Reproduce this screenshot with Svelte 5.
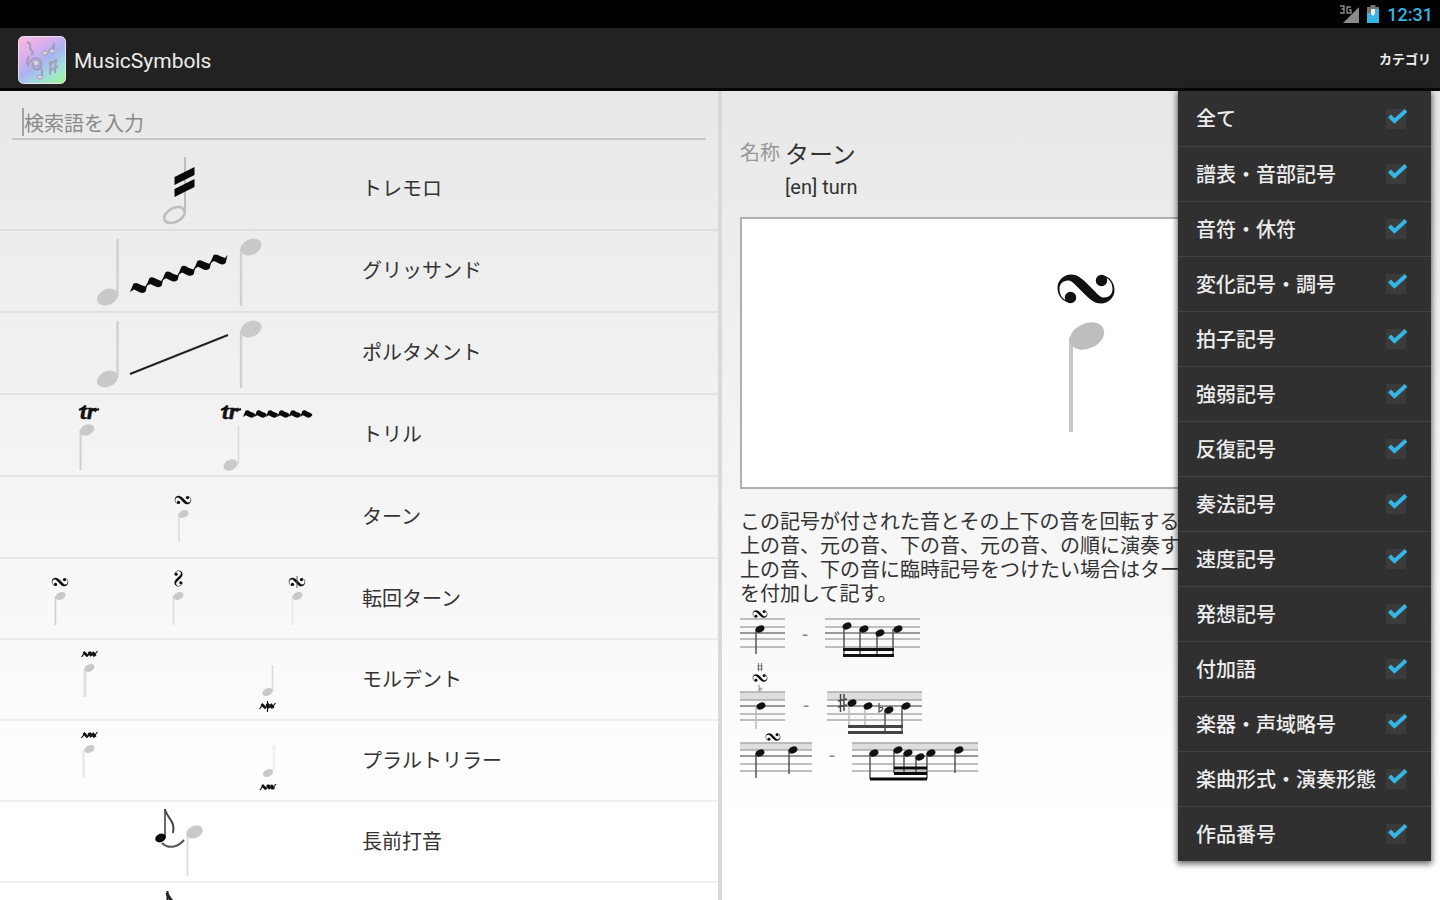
<script>
  const symbols = [
    { id: 'tremolo', name: 'トレモロ' },
    { id: 'glissando', name: 'グリッサンド' },
    { id: 'portamento', name: 'ポルタメント' },
    { id: 'trill', name: 'トリル' },
    { id: 'turn', name: 'ターン' },
    { id: 'inverted', name: '転回ターン', short: true },
    { id: 'mordent', name: 'モルデント', short: true },
    { id: 'pralltriller', name: 'プラルトリラー', short: true },
    { id: 'appoggiatura', name: '長前打音', short: true },
    { id: 'next', name: '', short: true }
  ];

  let categories = $state(
    [
      '全て', '譜表・音部記号', '音符・休符', '変化記号・調号', '拍子記号',
      '強弱記号', '反復記号', '奏法記号', '速度記号', '発想記号',
      '付加語', '楽器・声域略号', '楽曲形式・演奏形態', '作品番号'
    ].map((name) => ({ name, on: true }))
  );

  let query = $state('');

  const steps = (n) => Array.from({ length: n }, (_, i) => i);
</script>

{#snippet turn(x, y, s, r = 0)}
  <g transform="translate({x} {y}) rotate({r}) scale({s})" fill="#111">
    <path d="M-15 14C-24 13-28.500 6-28.500-1C-28.500-9-22-14.500-15-14.500C-9-14.500-5-11 0-6.500L9 2.500C13 6.500 15 8.500 18 8.500C23 8.500 26.500 5 26.500 0C26.500-6 23-11 18-12L15-14C24-13 28.500-6 28.500 1C28.500 9 22 14.500 15 14.500C9 14.500 5 11 0 6.500L-9-2.500C-13-6.500-15-8.500-18-8.500C-23-8.500-26.500-5-26.500 0C-26.500 6-23 11-18 12Z" />
    <circle cx="-15.500" cy="8.500" r="5.700" />
    <circle cx="15.500" cy="-8.500" r="5.700" />
  </g>
{/snippet}

{#snippet head(x, y, rx, ry, fill = '#c9c9c9')}
  <ellipse cx={x} cy={y} {rx} {ry} {fill} transform="rotate(-25 {x} {y})" />
{/snippet}

{#snippet stem(x, y1, y2, w = 2, color = '#d0d0d0')}
  <line x1={x} x2={x} {y1} {y2} stroke={color} stroke-width={w} />
{/snippet}

{#snippet wave(x, y, dx, dy, n, k)}
  {#each steps(n) as i}
    <path
      transform="translate({x + i * dx} {y + i * dy})"
      fill="#0a0a0a"
      d="M0 0L{dx * 0.22} {-k * 1.4}Q{dx * 0.4} {-k * 1.7} {dx * 0.65} {-k * 1.2}L{dx * 0.95} {-k * 0.9}L{dx * 1.1} {dy - k * 0.5}L{dx * 0.98} {-k * 0.1}Q{dx * 0.85} {k * 0.3} {dx * 0.6} {k * 0.05}L{dx * 0.25} {-k * 0.4}Z"
    />
  {/each}
{/snippet}

{#snippet mordent(x, y, bar = false)}
  <g transform="translate({x} {y})" stroke="#111" fill="none">
    <path d="M-8 3L-5-1L-2 2L1-2L4 2L8-3" stroke-width="1.200" />
    <path d="M-6-2L-2 2M-1-2L2 2M3-2L6 2" stroke-width="2.600" />
    {#if bar}<path d="M0-5V6" stroke-width="1.200" />{/if}
  </g>
{/snippet}

{#snippet staff(w, ys)}
  {#each ys as y, i}
    <line x1="0" x2={w} y1={y} y2={y} stroke={i === 2 ? '#777' : '#aaa'} stroke-width="1.600" />
  {/each}
{/snippet}

{#snippet notes(list, end, color = '#555')}
  {#each list as [x, y, sx, stop]}
    {@render stem(sx, y, stop ?? end, 1.5, color)}
    {@render head(x, y, 4.6, 3.3, '#111')}
  {/each}
{/snippet}

{#snippet trill(x, y)}
  <text {x} y={y} class="tr">tr</text>
  <path d="M{x - 1} {y - 9}L{x + 5} {y - 12}M{x + 12} {y - 10}q3 2 7 0" stroke="#111" stroke-width="2" fill="none" />
{/snippet}

{#snippet picture(id)}
  <svg class="picture" viewBox="0 0 360 81" aria-hidden="true">
    {#if id === 'tremolo'}
      {@render stem(185, 8, 62, 2, '#bdbdbd')}
      <ellipse cx="174.500" cy="66" rx="11" ry="7" transform="rotate(-28 174.500 66)" fill="none" stroke="#bdbdbd" stroke-width="2.600" />
      <path d="M174.500 28L194.500 18V26L174.500 36ZM174.500 40L194.500 30V38L174.500 48Z" fill="#0a0a0a" />
    {:else if id === 'glissando' || id === 'portamento'}
      {@render stem(117.500, 8, 65, 2.4)}
      {@render head(107.500, 66, 11, 7.8)}
      {@render stem(241, 18, 75, 2.4)}
      {@render head(251, 16, 11, 7.8)}
      {#if id === 'glissando'}
        {@render wave(130, 61, 16, -5.7, 6, 6)}
      {:else}
        <line x1="130" y1="61" x2="228" y2="22" stroke="#222" stroke-width="2" />
      {/if}
    {:else if id === 'trill'}
      {@render stem(80.500, 35, 75)}
      {@render head(87, 35, 7.5, 5.2)}
      {@render trill(80, 24)}
      {@render trill(222, 24)}
      {@render stem(238.500, 30, 69, 1.6, '#dcdcdc')}
      {@render head(230.500, 70, 7.5, 5.2)}
      {@render wave(243, 22, 11.4, 0, 6, 4.4)}
    {:else if id === 'turn'}
      {@render turn(183, 23, 0.29)}
      {@render stem(179, 37, 65, 1.6, '#dcdcdc')}
      {@render head(183.500, 37, 5.3, 3.6)}
    {:else if id === 'inverted'}
      {@render turn(60, 23, 0.29)}
      {@render stem(55.500, 37, 66, 1.6)}
      {@render head(60.500, 37, 5.3, 3.6)}
      {@render turn(178.500, 19.500, 0.28, 90)}
      {@render stem(173.500, 37, 66, 1.6, '#dcdcdc')}
      {@render head(178.500, 37, 5.3, 3.6)}
      {@render turn(297, 23, 0.29)}
      {@render stem(297, 17, 29, 1, '#555')}
      {@render stem(292.500, 37, 66, 1.6, '#e6e6e6')}
      {@render head(297.500, 37, 5.3, 3.6)}
    {:else if id === 'mordent'}
      {@render mordent(89.500, 14)}
      {@render stem(85, 29, 57, 3, '#e0e0e0')}
      {@render head(89.500, 28, 5.3, 3.6)}
      {@render stem(272.500, 25, 52, 1.6, '#dcdcdc')}
      {@render head(267.500, 52, 5.3, 3.6)}
      {@render mordent(267.500, 66, true)}
    {:else if id === 'pralltriller'}
      {@render mordent(89.500, 14)}
      {@render stem(83.500, 29, 57, 2, '#e4e4e4')}
      {@render head(89.500, 28, 5.3, 3.6)}
      {@render stem(274, 24, 50, 3, '#f0f0f0')}
      {@render head(268, 52, 5.3, 3.6)}
      {@render mordent(268, 66)}
    {:else if id === 'appoggiatura'}
      {@render stem(165, 7, 36, 1.6, '#444')}
      {@render head(160.500, 36, 5.5, 4.2, '#0a0a0a')}
      <path d="M165 7C166 15 176 19 173 31" fill="none" stroke="#444" stroke-width="2" />
      <path d="M162 41C168 47 177 46 184 38" fill="none" stroke="#555" stroke-width="2" />
      {@render stem(187.500, 33, 74, 1.8, '#dcdcdc')}
      {@render head(194.500, 30, 8.6, 6)}
    {:else}
      {@render stem(167.500, 8, 36, 2, '#222')}
      <path d="M167 10C168 16 177 19 175 31" fill="none" stroke="#222" stroke-width="3" />
    {/if}
  </svg>
{/snippet}

<div class="app">
  <div class="status">
    <svg class="signal" viewBox="0 0 22 20" aria-hidden="true">
      <path d="M20 3V19H4Z" fill="#8b8b8b" />
      <path d="M1 2H5V5H2.500M5 5V9H1M12 3H8V9H12V6H10" fill="none" stroke="#8b8b8b" stroke-width="1.400" />
    </svg>
    <svg class="battery" viewBox="0 0 12 18" aria-hidden="true">
      <path d="M3.500 0H8.500V2H12V10H0V2H3.500Z" fill="#77736d" />
      <path d="M0 8H4L8 4H12V18H0Z" fill="#33b5e5" />
      <path d="M4 4H8V9L6 11L4 9Z" fill="#eee" />
    </svg>
    <time>12:31</time>
  </div>

  <header>
    <svg class="logo" viewBox="0 0 48 48" aria-hidden="true">
      <defs>
        <linearGradient id="tint" x1="0.100" y1="0" x2="0.800" y2="1">
          <stop offset="0" stop-color="#f9b9dc" />
          <stop offset="0.300" stop-color="#dcaef0" />
          <stop offset="0.550" stop-color="#a9b4f2" />
          <stop offset="0.800" stop-color="#9fe0dc" />
          <stop offset="1" stop-color="#9df0a0" />
        </linearGradient>
      </defs>
      <rect x="0.500" y="0.500" width="47" height="47" rx="5" fill="url(#tint)" stroke="#e8e4ee" />
      <g fill="none" stroke="#a39db8" stroke-width="2">
        <path d="M9 6C15 8 10 11 13 14S15 17 13 19M11 20C8 26 9 29 11 31M36 7V15M30 16L36 10" />
        <path d="M11 28C15 18 25 22 23 31C20 36 13 32 15 28S21 27 20 31M24 33V41" />
        <path d="M31 28L39 24M31 35L40 30M33 25L32 39M38 23L37 37" />
      </g>
      <g fill="#d7d5e2" stroke="#a39db8">
        <ellipse cx="27" cy="17" rx="3" ry="2" /><ellipse cx="34" cy="15" rx="3" ry="2" />
        <ellipse cx="22" cy="41" rx="3" ry="2" /><circle cx="18" cy="27" r="3" />
      </g>
    </svg>
    <h1>MusicSymbols</h1>
    <button class="category">カテゴリ</button>
  </header>

  <main>
    <section class="list-pane">
      <div class="search">
        <span class="caret"></span>
        <input type="text" aria-label="検索語を入力" placeholder="検索語を入力" bind:value={query} />
      </div>
      <ul class="symbols">
        {#each symbols as s (s.id)}
          <li class:short={s.short}>
            <button class="symbol">
              {@render picture(s.id)}
              <span>{s.name}</span>
            </button>
          </li>
        {/each}
      </ul>
    </section>
    <div class="divider"></div>

    <section class="detail">
      <div class="names">
        <span class="key">名称</span>
        <div>
          <h2>ターン</h2>
          <p class="foreign">[en] turn</p>
        </div>
      </div>
      <div class="sheet">
        <svg viewBox="0 0 60 170" aria-hidden="true">
          {@render turn(30, 20, 1)}
          {@render stem(15, 68, 163, 4, '#c8c8c8')}
          {@render head(31, 67, 18, 12.5, '#bebebe')}
        </svg>
      </div>
      <p class="about">
        この記号が付された音とその上下の音を回転する<br />
        上の音、元の音、下の音、元の音、の順に演奏す<br />
        上の音、下の音に臨時記号をつけたい場合はター<br />
        を付加して記す。
      </p>

      <div class="example">
        <svg width="45" height="55" aria-hidden="true">
          {@render turn(20, 8, 0.26)}
          {@render staff(45, [13, 21, 27, 33, 41])}
          {@render notes([[20, 23, 16]], 48)}
        </svg>
        <span>-</span>
        <svg width="95" height="55" aria-hidden="true">
          {@render staff(95, [13, 21, 27, 33, 41])}
          {@render notes([[22, 20, 19], [39, 23, 35], [55, 27, 52], [73, 23, 68]], 49)}
          <path d="M18 43.500H69M18 49.500H69" stroke="#111" stroke-width="3" />
        </svg>
      </div>
      <div class="example tall">
        <svg width="45" height="73" aria-hidden="true">
          <path d="M18.500 2V10M21.500 2V10M17 5H23M17 8H23" stroke="#777" fill="none" />
          {@render turn(20, 17, 0.26)}
          <path d="M19 24V30C24 28 22 26 19 28" stroke="#888" fill="none" />
          <rect y="31" width="45" height="8" fill="#dedede" />
          {@render staff(45, [31, 39, 45, 53, 59])}
          {@render notes([[21, 45, 16]], 68, '#bbb')}
        </svg>
        <span>-</span>
        <svg width="95" height="73" aria-hidden="true">
          <rect y="31" width="95" height="8" fill="#dedede" />
          {@render staff(95, [31, 39, 45, 53, 59])}
          <path d="M13.500 33V51M17 33V50M11 40L20 38M11 46L20 44" stroke="#444" stroke-width="1.500" fill="none" />
          <path d="M52 42V51C58 48 56 45 52 47" stroke="#555" stroke-width="1.300" fill="none" />
          {@render notes([[25, 42, 22], [41, 45, 38]], 66, '#bbb')}
          {@render notes([[62, 49, 58], [79, 45, 75]], 71)}
          <path d="M21 65.500H76M21 71.500H76" stroke="#444" stroke-width="3" />
        </svg>
      </div>
      <div class="example last">
        <svg width="72" height="55" aria-hidden="true">
          <rect y="9" width="72" height="7" fill="#dedede" />
          {@render turn(33, 3, 0.26)}
          {@render staff(72, [9, 16, 22, 30, 37])}
          {@render notes([[20, 19, 16], [53, 16, 49, 40]], 44)}
        </svg>
        <span>-</span>
        <svg width="126" height="55" aria-hidden="true">
          <rect y="9" width="126" height="7" fill="#dedede" />
          {@render staff(126, [9, 16, 22, 30, 37])}
          {@render notes([[22, 19, 18], [46, 16, 42, 39], [56, 19, 52, 39], [68, 23, 64, 39], [79, 19, 75], [107, 16, 103, 39]], 45)}
          <path d="M42 34H75M42 39.500H75M18 45H75" stroke="#0a0a0a" stroke-width="3" />
        </svg>
      </div>
    </section>

    <div class="menu">
      {#each categories as c (c.name)}
        <label>
          <span class="name">{c.name}</span>
          <span class="box">
            <input type="checkbox" bind:checked={c.on} />
            {#if c.on}
              <svg viewBox="0 0 24 24" aria-hidden="true">
                <path d="M3.500 11L8.500 16L20 5.500" fill="none" stroke="#33b5e5" stroke-width="4" />
              </svg>
            {/if}
          </span>
        </label>
      {/each}
    </div>
  </main>
</div>

<style>
  :global(body) {
    margin: 0;
    background: #fff;
  }
  .app {
    height: 100vh;
    display: flex;
    flex-direction: column;
    overflow: hidden;
    font-family: Roboto, "Noto Sans CJK JP", sans-serif;
    font-size: 20px;
    color: #333;
  }
  h1, h2, p, ul {
    margin: 0;
    padding: 0;
    font-weight: 400;
  }
  button {
    font: inherit;
    color: inherit;
    background: none;
    border: 0;
    padding: 0;
    text-align: left;
  }
  .status {
    flex: none;
    height: 28px;
    display: flex;
    align-items: center;
    justify-content: flex-end;
    padding-right: 7px;
    background: #000;
    color: #33b5e5;
    font-size: 18px;
    font-weight: 500;
  }
  .signal {
    width: 22px;
    height: 20px;
    margin-right: 6px;
  }
  .battery {
    width: 12px;
    height: 18px;
    margin-right: 8px;
  }
  header {
    flex: none;
    box-sizing: border-box;
    height: 63px;
    display: flex;
    align-items: center;
    padding: 4px 9px 0 18px;
    background: #222;
    border-bottom: 3px solid #080808;
  }
  .logo {
    width: 48px;
    height: 48px;
    margin-right: 8px;
  }
  h1 {
    flex: 1;
    padding-top: 2px;
    font-size: 21px;
    color: #ececec;
  }
  .category {
    padding-bottom: 4px;
    font-size: 13px;
    font-weight: 700;
    color: #f0f0f0;
  }
  main {
    position: relative;
    flex: 1;
    min-height: 0;
    display: grid;
    grid-template-columns: minmax(0, 1fr) 4px minmax(0, 1fr);
    background: linear-gradient(#e8e8e8, #fff 90%);
  }
  .list-pane,
  .detail {
    min-height: 0;
    overflow: hidden;
  }
  .divider {
    background: #d9d9d9;
  }
  .search {
    box-sizing: border-box;
    display: flex;
    align-items: center;
    height: 49px;
    margin: 0 12px 9px;
    padding-left: 10px;
    border-bottom: 2px solid #c6c6c6;
  }
  .caret {
    width: 2px;
    height: 28px;
    margin-top: 14px;
    background: #a4a4a4;
  }
  .search input {
    flex: 1;
    min-width: 0;
    height: 32px;
    margin-top: 18px;
    padding: 0;
    border: 0;
    outline: 0;
    background: none;
    font: inherit;
    color: #333;
  }
  .search input::placeholder {
    color: #8a8a8a;
    opacity: 1;
  }
  .symbols {
    list-style: none;
  }
  .symbols li {
    box-sizing: border-box;
    height: 82px;
    border-bottom: 2px solid rgb(0 0 0 / 6%);
  }
  .symbols .short {
    height: 81px;
  }
  .symbol {
    width: 100%;
    height: 100%;
    display: flex;
    align-items: center;
    gap: 2px;
  }
  .symbol span {
    padding-bottom: 3px;
  }
  .picture {
    flex: none;
    align-self: flex-start;
    width: 360px;
    height: 81px;
  }
  .tr {
    font: italic 700 24px "Liberation Serif", serif;
    fill: #111;
    stroke: #111;
    stroke-width: 0.5;
  }
  .detail {
    padding: 48px 9px 0 18px;
  }
  .names {
    display: flex;
    gap: 5px;
  }
  .key {
    color: #989898;
    line-height: 28px;
  }
  h2 {
    font-size: 24px;
    line-height: 32px;
  }
  .foreign {
    line-height: 32px;
  }
  .sheet {
    box-sizing: border-box;
    height: 272px;
    margin: 14px 0 21px;
    padding-top: 2px;
    display: flex;
    justify-content: center;
    align-items: center;
    background: #fff;
    border: 2px solid #b0b0b0;
  }
  .sheet svg {
    width: 60px;
    height: 170px;
  }
  .about {
    line-height: 24px;
    white-space: nowrap;
  }
  .example {
    height: 55px;
    display: flex;
    align-items: center;
  }
  .example.tall {
    height: 73px;
  }
  .example svg {
    overflow: visible;
  }
  .example span {
    width: 40px;
    text-align: center;
    color: #888;
  }
  .tall span {
    width: 42px;
    padding-top: 14px;
  }
  .last span {
    padding-bottom: 14px;
  }
  .menu {
    position: absolute;
    top: 0;
    right: 9px;
    width: 253px;
    background: #303030;
    box-shadow: 0 2px 6px 1px rgb(0 0 0 / 60%);
    color: #ededed;
    font-weight: 500;
  }
  .menu label {
    box-sizing: border-box;
    height: 55px;
    display: flex;
    align-items: center;
    justify-content: space-between;
    padding: 0 25px 0 18px;
    white-space: nowrap;
  }
  .menu label + label {
    border-top: 1px solid #434343;
  }
  .name {
    padding-bottom: 2px;
  }
  .box {
    position: relative;
    width: 20px;
    height: 20px;
  }
  .box input {
    appearance: none;
    display: block;
    width: 20px;
    height: 20px;
    margin: 0;
    background: #3b3b3b;
  }
  .box svg {
    position: absolute;
    left: 0;
    top: -4px;
    width: 24px;
    height: 24px;
    pointer-events: none;
  }
</style>
